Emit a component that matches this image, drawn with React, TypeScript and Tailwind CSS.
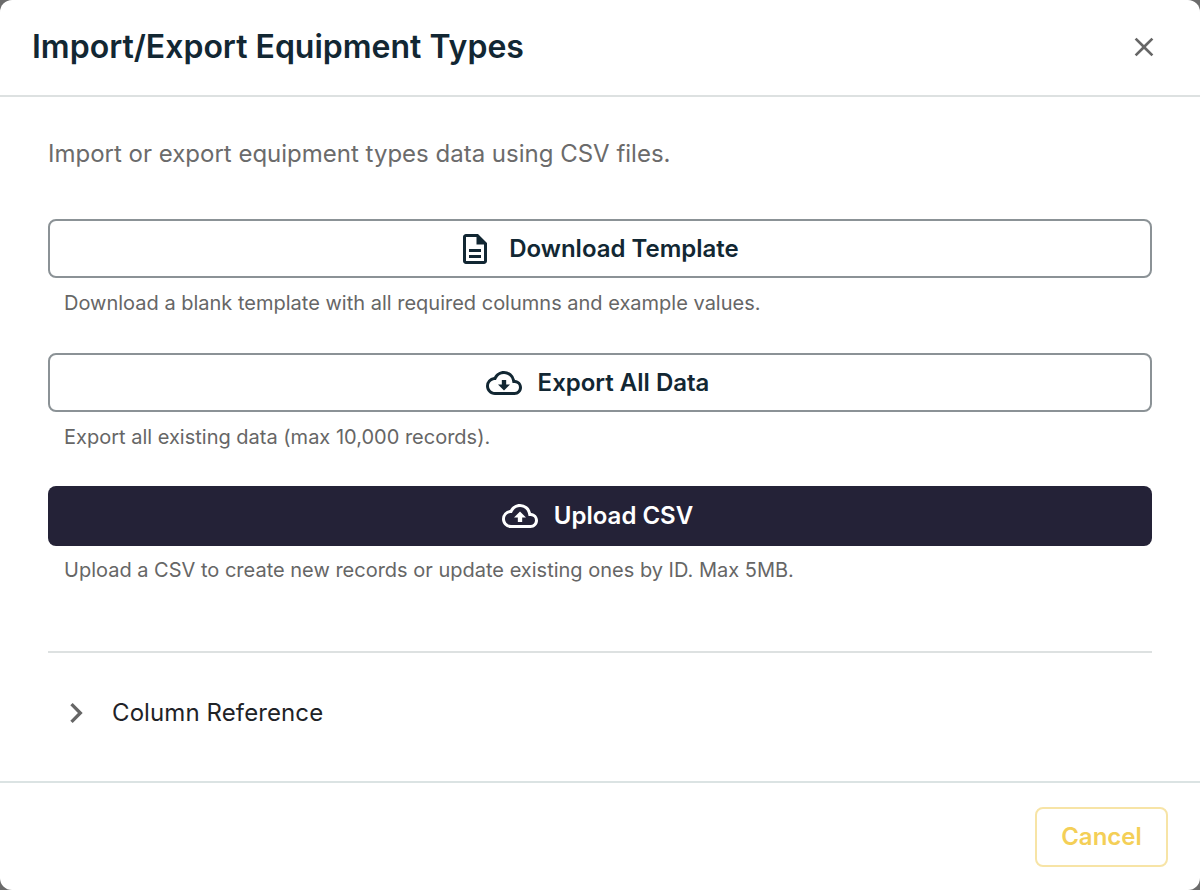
import { MdClose, MdChevronRight, MdOutlineCloudDownload, MdOutlineCloudUpload, MdOutlineDescription } from "react-icons/md";

const font = { fontFamily: "Inter, sans-serif" };

function Help({ children, className }: { children: string; className: string }) {
  return <p className={`pl-4 text-[20px] leading-[22px] text-[#666666] ${className}`}>{children}</p>;
}

export default function App() {
  return (
    <div className="h-[890px] w-[1200px] overflow-hidden bg-[#6b6b6b]" style={font}>
      <div className="flex h-full flex-col rounded-[12px] bg-white">
        {/* Header */}
        <div className="flex h-[97px] shrink-0 items-center justify-between border-b-2 border-[#dde1e1] pl-[32px] pr-[40px] pb-[2px]">
          <h2 className="text-[32px] font-semibold leading-[38px] text-[#122733]">Import/Export Equipment Types</h2>
          <MdClose className="text-[#666666]" size={32} />
        </div>

        {/* Body */}
        <div className="flex flex-1 flex-col px-[48px] pt-[41px]">
          <p className="text-[24px] leading-[32px] text-[#6b6b6b]">Import or export equipment types data using CSV files.</p>

          <button className="mt-[49px] flex h-[59px] items-center justify-center gap-[16px] rounded-[8px] border-2 border-[#8b9296] pr-[4px] text-[24px] font-semibold text-[#122733]">
            <MdOutlineDescription size={36} />
            Download Template
          </button>
          <Help className="mt-[14px]">Download a blank template with all required columns and example values.</Help>

          <button className="mt-[39px] flex h-[59px] items-center justify-center gap-[16px] rounded-[8px] border-2 border-[#8b9296] pr-[5px] text-[24px] font-semibold text-[#122733]">
            <MdOutlineCloudDownload size={36} />
            Export All Data
          </button>
          <Help className="mt-[14px]">Export all existing data (max 10,000 records).</Help>

          <button className="mt-[38px] flex h-[60px] items-center justify-center gap-[16px] rounded-[8px] bg-[#242237] pr-[5px] text-[24px] font-semibold text-white">
            <MdOutlineCloudUpload size={36} />
            Upload CSV
          </button>
          <Help className="mt-[13px]">Upload a CSV to create new records or update existing ones by ID. Max 5MB.</Help>

          <div className="mt-[70px] border-t-2 border-[#dde1e1]" />

          <div className="flex h-[120px] items-center gap-[16px] pl-[8px]">
            <MdChevronRight className="text-[#666666]" size={40} />
            <span className="text-[24px] leading-[32px] tracking-[0.1px] text-[#1f2327]">Column Reference</span>
          </div>
        </div>

        {/* Footer */}
        <div className="flex h-[109px] shrink-0 items-start justify-end border-t-2 border-[#dbe3e3] pr-[32px] pt-[24px]">
          <button className="flex h-[60px] w-[133px] items-center justify-center rounded-[8px] border-2 border-[#f7e4a6] text-[24px] font-semibold text-[#f4cf57]">
            Cancel
          </button>
        </div>
      </div>
    </div>
  );
}
